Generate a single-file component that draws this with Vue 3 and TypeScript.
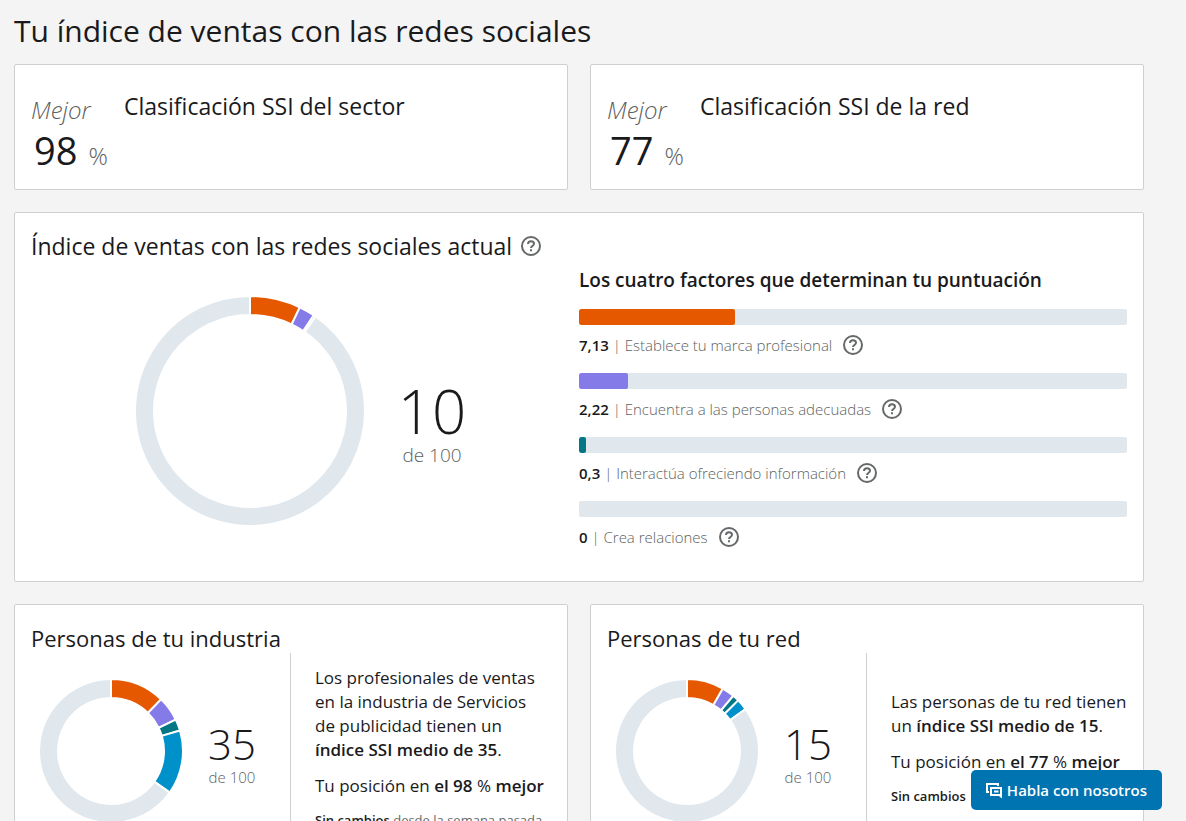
<script setup lang="ts">
interface Slice { value: number; tone: string }
interface Factor { score: string; value: number; label: string; tone: string }
interface Group { id: string; title: string; score: number; slices: Slice[] }

const tones = ['brand', 'people', 'insight', 'relation']

const ranks = [
  { value: 98, title: 'Clasificación SSI del sector' },
  { value: 77, title: 'Clasificación SSI de la red' },
]

const factors: Factor[] = [
  { score: '7,13', value: 7.13, label: 'Establece tu marca profesional', tone: 'brand' },
  { score: '2,22', value: 2.22, label: 'Encuentra a las personas adecuadas', tone: 'people' },
  { score: '0,3', value: 0.3, label: 'Interactúa ofreciendo información', tone: 'insight' },
  { score: '0', value: 0, label: 'Crea relaciones', tone: 'relation' },
]

const toSlices = (values: number[]): Slice[] => values.map((value, i) => ({ value, tone: tones[i] }))

const groups: Group[] = [
  { id: 'industry', title: 'Personas de tu industria', score: 35, slices: toSlices([12.25, 5.55, 2.6, 14.4]) },
  { id: 'network', title: 'Personas de tu red', score: 15, slices: toSlices([8.3, 2.8, 1.5, 2.5]) },
]

/* Ring sectors, clockwise from twelve o'clock; the remainder up to 100 is the empty track. */
function ring(slices: Slice[], c: number, outer: number, inner: number) {
  const used = slices.reduce((sum, s) => sum + s.value, 0)
  const all = [...slices.filter((s) => s.value > 0), { value: 100 - used, tone: 'rest' }]
  let start = 0
  return all.map((s) => {
    const a = (start / 100) * Math.PI * 2
    start += s.value
    const b = (start / 100) * Math.PI * 2
    const large = b - a > Math.PI ? 1 : 0
    const pt = (r: number, t: number) => `${(c + r * Math.sin(t)).toFixed(2)} ${(c - r * Math.cos(t)).toFixed(2)}`
    return {
      tone: s.tone,
      d: `M${pt(outer, a)}A${outer} ${outer} 0 ${large} 1 ${pt(outer, b)}L${pt(inner, b)}A${inner} ${inner} 0 ${large} 0 ${pt(inner, a)}Z`,
    }
  })
}

const mainRing = ring(factors, 115, 115, 96)
const groupRings = groups.map((g) => ring(g.slices, 72, 72, 53))
</script>

<template>
  <main class="page">
    <h1>Tu índice de ventas con las redes sociales</h1>

    <div class="pair">
      <section v-for="r in ranks" :key="r.title" class="card rank">
        <div class="rank-figure">
          <em>Mejor</em>
          <p class="rank-value"><strong>{{ r.value }}</strong><span>%</span></p>
        </div>
        <h2>{{ r.title }}</h2>
      </section>
    </div>

    <section class="card current">
      <header>
        <h2>Índice de ventas con las redes sociales actual</h2>
        <button class="help" type="button" aria-label="Ayuda">
          <svg viewBox="0 0 22 22" width="22" height="22"><circle cx="11" cy="11" r="9" /><path d="M8 9c0-1.700 1.300-2.800 3-2.800s3 1 3 2.500c0 2.300-3 2.200-3 4.300" /><path d="M11 14.300v2" /></svg>
        </button>
      </header>
      <div class="current-body">
        <div class="overview">
          <svg class="ring-large" viewBox="0 0 230 230" role="img" aria-label="10 de 100">
            <path v-for="(s, i) in mainRing" :key="i" :class="['slice', s.tone]" :d="s.d" />
          </svg>
          <p class="score large"><strong>10</strong><span>de 100</span></p>
        </div>
        <div class="factors">
          <h3>Los cuatro factores que determinan tu puntuación</h3>
          <div v-for="f in factors" :key="f.label" class="factor">
            <div class="track"><div :class="['fill', f.tone]" :style="{ width: (f.value / 25) * 100 + '%' }"></div></div>
            <div class="factor-text">
              <p><b>{{ f.score }}</b> | {{ f.label }}</p>
              <button class="help" type="button" :aria-label="'Ayuda: ' + f.label">
                <svg viewBox="0 0 22 22" width="22" height="22"><circle cx="11" cy="11" r="9" /><path d="M8 9c0-1.700 1.300-2.800 3-2.800s3 1 3 2.500c0 2.300-3 2.200-3 4.300" /><path d="M11 14.300v2" /></svg>
              </button>
            </div>
          </div>
        </div>
      </div>
    </section>

    <div class="pair">
      <section v-for="(g, gi) in groups" :key="g.id" class="card group">
        <h2>{{ g.title }}</h2>
        <div class="group-body">
          <div class="group-score">
            <svg class="ring-small" viewBox="0 0 144 144" role="img" :aria-label="g.score + ' de 100'">
              <path v-for="(s, i) in groupRings[gi]" :key="i" :class="['slice', s.tone]" :d="s.d" />
            </svg>
            <p class="score"><strong>{{ g.score }}</strong><span>de 100</span></p>
          </div>
          <div class="group-text">
            <template v-if="g.id === 'industry'">
              <p>Los profesionales de ventas en la industria de Servicios de&nbsp;publicidad tienen un <b>índice&nbsp;SSI medio de 35</b>.</p>
              <p>Tu posición en <b>el 98</b> % <b>mejor</b></p>
              <p class="change"><b>Sin cambios</b> desde la semana pasada</p>
            </template>
            <template v-else>
              <p>Las personas de tu red tienen un <b>índice&nbsp;SSI medio de 15</b>.</p>
              <p>Tu posición en <b>el 77</b> % <b>mejor</b></p>
              <p class="change"><b>Sin cambios</b></p>
            </template>
          </div>
        </div>
      </section>
    </div>

    <button class="chat" type="button">
      <svg viewBox="0 0 16 16" width="16" height="16"><path d="M3 10H1V2h11v2" /><path d="M5 6h10v8.500L13.500 13H5z" /><path d="M8 9.500h4.500" /></svg>
      Habla con nosotros
    </button>
  </main>
</template>

<style>
html,
body {
  height: 100%;
  margin: 0;
  overflow: hidden;
  background: #f4f4f4;
}
</style>

<style scoped>
.page {
  padding: 11px 42px 0 14px;
  font-family: "Open Sans", "Noto Sans", sans-serif;
  font-size: 17px;
  font-weight: 300;
  line-height: 24px;
  color: #1a1a1c;
}
h1, h2, h3, p { margin: 0; }
h1 {
  margin-bottom: 13px;
  font-size: 30px;
  font-weight: 400;
  line-height: 40px;
}
h2 {
  font-size: 23px;
  font-weight: 400;
  line-height: 32px;
}
h3 {
  font-size: 19px;
  font-weight: 600;
  line-height: 24px;
}
b { font-weight: 600; }
button {
  border: 0;
  font-family: inherit;
  cursor: pointer;
}
.pair {
  display: grid;
  grid-template-columns: repeat(2, minmax(0, 1fr));
  gap: 22px;
}
.card {
  box-sizing: border-box;
  padding: 0 16px;
  border: 1px solid #cfcfcf;
  border-radius: 2px;
  background: #fff;
}

.rank {
  display: flex;
  padding-top: 25px;
  padding-bottom: 9px;
}
.rank-figure {
  flex: 0 0 93px;
  padding-top: 4px;
}
.rank-figure em {
  display: block;
  font-size: 24px;
  line-height: 32px;
  color: #5c5f60;
}
.rank-value {
  display: flex;
  align-items: baseline;
  gap: 11px;
  padding-left: 3px;
  line-height: 48px;
}
.rank-value strong {
  font-size: 38px;
  font-weight: 400;
}
.rank-value span {
  font-size: 24px;
  color: #5c5f60;
}

.current {
  margin: 22px 0;
  padding-top: 17px;
  padding-bottom: 32px;
}
.current header {
  display: flex;
  align-items: center;
  gap: 8px;
}
.help {
  display: block;
  padding: 0;
  background: none;
}
.help svg { display: block; }
.help circle,
.help path {
  fill: none;
  stroke: #66696a;
  stroke-width: 2;
}
.current-body {
  display: grid;
  grid-template-columns: repeat(2, minmax(0, 1fr));
}
.overview {
  display: flex;
  justify-content: center;
  padding: 34px 9px 0 0;
}
.ring-large {
  flex: none;
  width: 230px;
  height: 230px;
}
.slice {
  stroke: #fff;
  stroke-width: 2;
}
.slice.brand { fill: #e65800; }
.slice.people { fill: #847be8; }
.slice.insight { fill: #047785; }
.slice.relation { fill: #0091ca; }
.slice.rest { fill: #e0e7ed; }
.score {
  display: flex;
  flex-direction: column;
  text-align: center;
}
.score strong {
  font-size: 42px;
  font-weight: 300;
  line-height: 46px;
}
.score span {
  font-size: 15px;
  line-height: 20px;
  color: #5c5f60;
}
.score.large {
  padding: 83px 0 0 33px;
}
.score.large strong {
  font-size: 60px;
  line-height: 64px;
}
.score.large span {
  font-size: 19px;
  line-height: 24px;
}

.factors { padding-top: 6px; }
.factor { padding-top: 17px; }
.factor + .factor { padding-top: 16px; }
.track {
  height: 16px;
  overflow: hidden;
  border-radius: 2px;
  background: #e0e7ed;
}
.fill {
  height: 100%;
  border-radius: 2px;
}
.fill.brand { background: #e65800; }
.fill.people { background: #847be8; }
.fill.insight { background: #047785; }
.fill.relation { background: #0091ca; }
.factor-text {
  display: flex;
  align-items: center;
  gap: 10px;
  height: 32px;
  padding-top: 8px;
  box-sizing: border-box;
  font-size: 15px;
  color: #5c5f60;
}
.factor-text b { color: #1a1a1c; }

.group {
  padding-top: 18px;
  padding-bottom: 24px;
}
.group h2 {
  font-size: 22px;
  line-height: 30px;
}
.group-body {
  display: flex;
}
.group-score {
  display: flex;
  align-items: flex-start;
  flex: 0 0 259px;
  min-height: 190px;
  padding: 26px 0 0 8px;
  box-sizing: border-box;
}
.ring-small {
  flex: none;
  width: 144px;
  height: 144px;
}
.group-score .score { padding: 42px 0 0 25px; }
.group-text {
  display: flex;
  flex: 1;
  flex-direction: column;
  justify-content: center;
  gap: 12px;
  min-width: 0;
  padding-left: 24px;
  border-left: 1px solid #cfcfcf;
  font-weight: 400;
}
.change {
  font-size: 13px;
  line-height: 20px;
  color: #66696a;
}
.change b { color: #1a1a1c; }

.chat {
  position: fixed;
  right: 24px;
  bottom: 11px;
  display: flex;
  align-items: center;
  gap: 5px;
  height: 40px;
  padding: 0 15px;
  border-radius: 5px;
  background: #0073b1;
  color: #fff;
  font-size: 15px;
  font-weight: 600;
  white-space: nowrap;
}
.chat path {
  fill: none;
  stroke: #fff;
  stroke-width: 2;
}
</style>
